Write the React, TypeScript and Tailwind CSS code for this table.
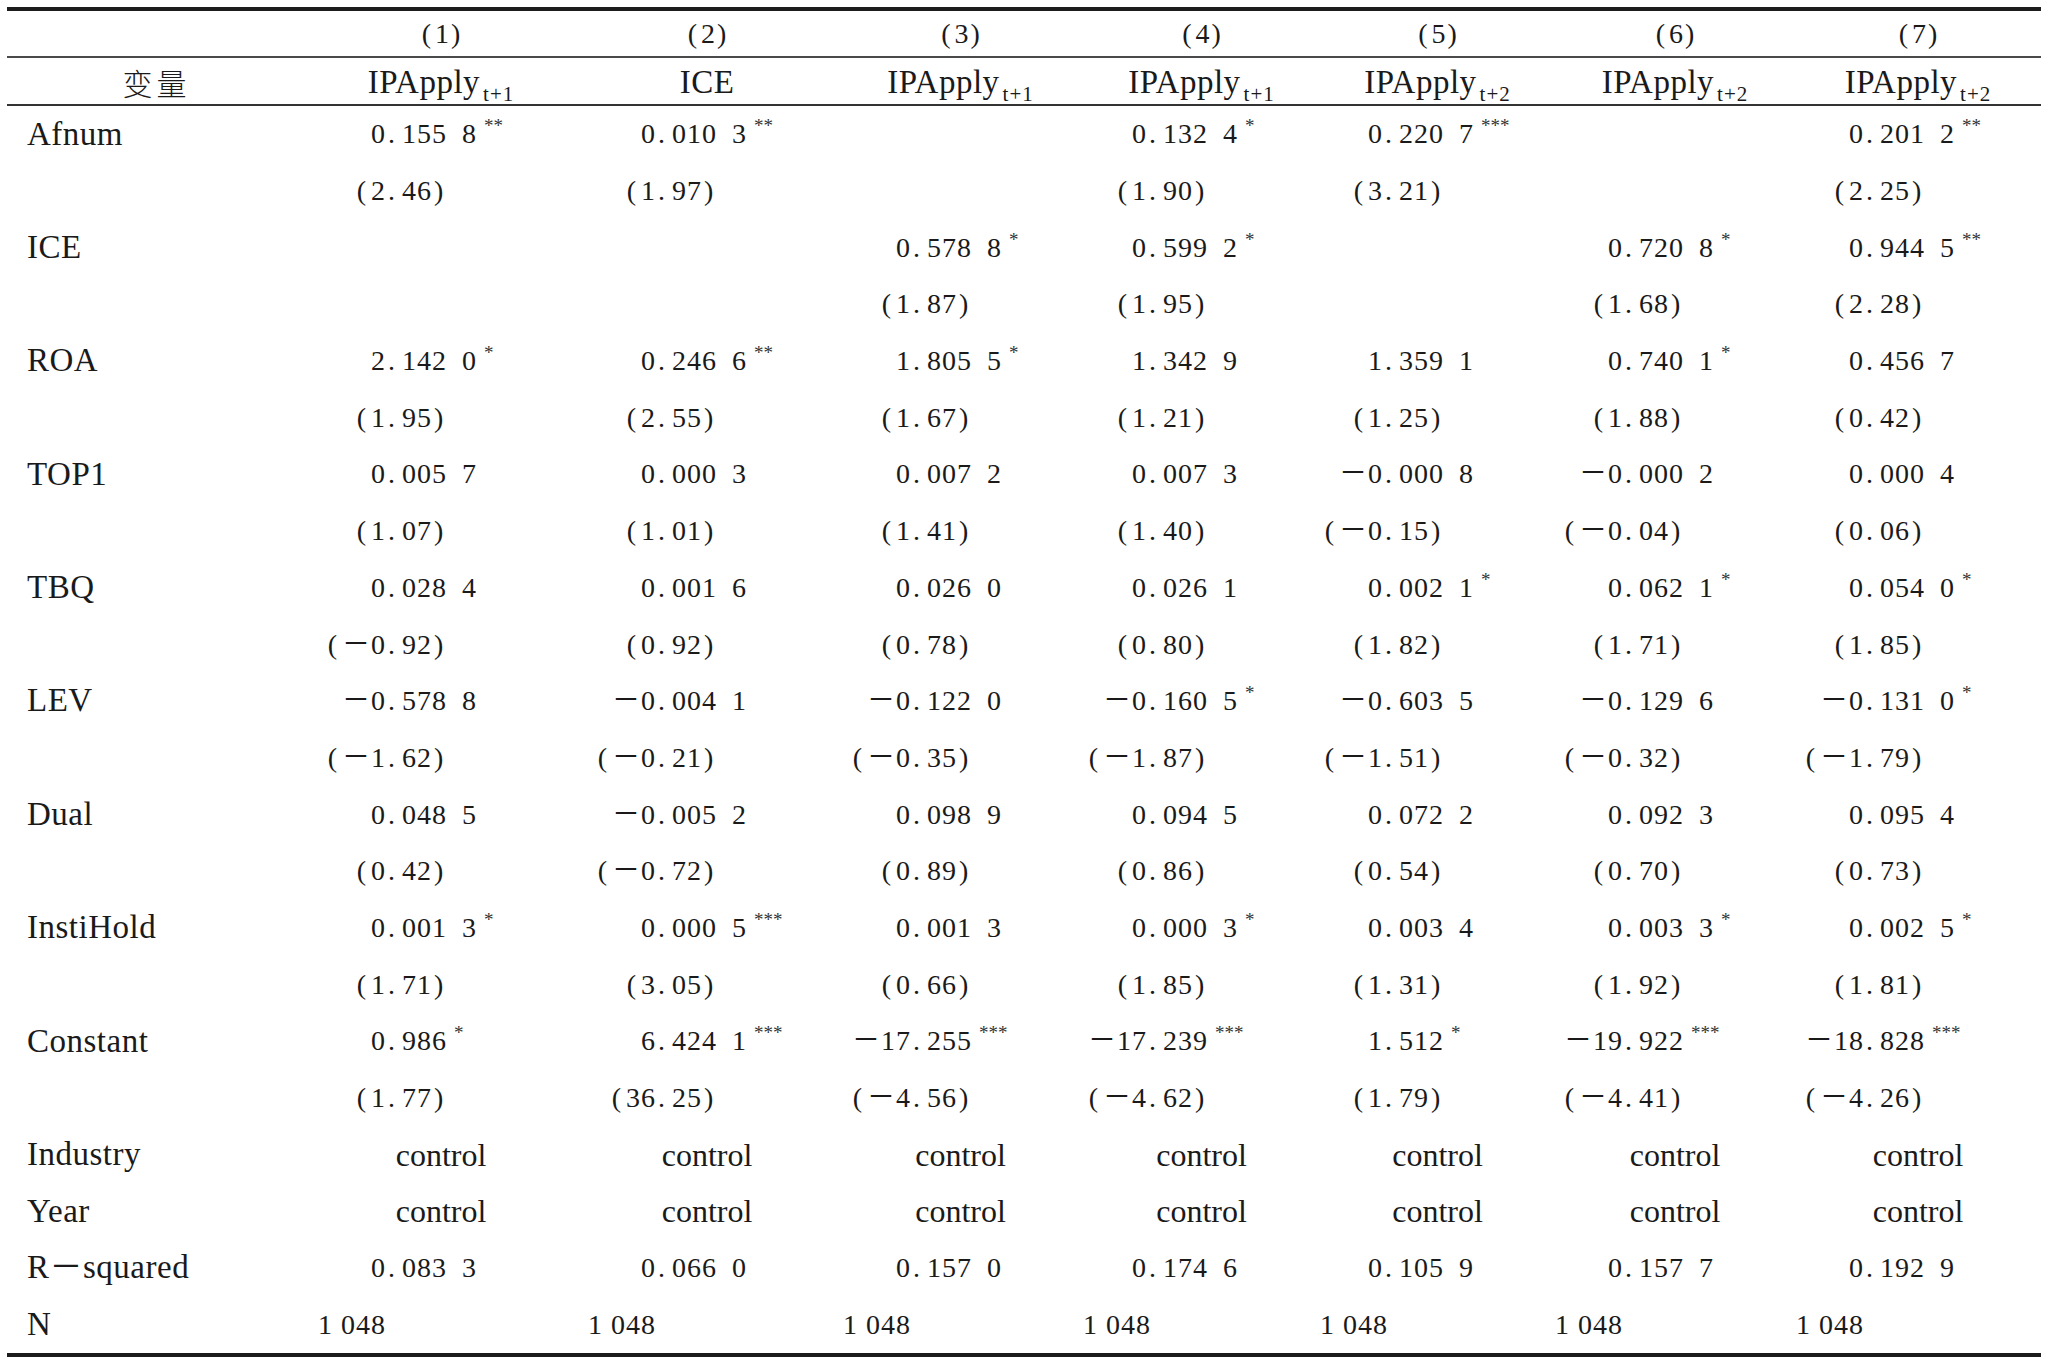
import React from 'react';

type Cell = { v: string; s?: string } | null;

const colWidths = 'grid-cols-[299px_270px_262px_245px_237px_235px_240px_246px]';

// width of the integer part box in each column, so that the decimal points line up
const intBox = ['w-[80px]', 'w-[80px]', 'w-[73px]', 'w-[64px]', 'w-[63px]', 'w-[68px]', 'w-[69px]'];

const heads1 = ['(1)', '(2)', '(3)', '(4)', '(5)', '(6)', '(7)'];
const heads2: [string, string][] = [
  ['IPApply', 't+1'],
  ['ICE', ''],
  ['IPApply', 't+1'],
  ['IPApply', 't+1'],
  ['IPApply', 't+2'],
  ['IPApply', 't+2'],
  ['IPApply', 't+2'],
];

const c = (v: string, s?: string): Cell => ({ v, s });

const rows: { label: string; cells: (Cell | 'control')[] }[] = [
  { label: 'Afnum', cells: [c('0.155 8', '**'), c('0.010 3', '**'), null, c('0.132 4', '*'), c('0.220 7', '***'), null, c('0.201 2', '**')] },
  { label: '', cells: [c('(2.46)'), c('(1.97)'), null, c('(1.90)'), c('(3.21)'), null, c('(2.25)')] },
  { label: 'ICE', cells: [null, null, c('0.578 8', '*'), c('0.599 2', '*'), null, c('0.720 8', '*'), c('0.944 5', '**')] },
  { label: '', cells: [null, null, c('(1.87)'), c('(1.95)'), null, c('(1.68)'), c('(2.28)')] },
  { label: 'ROA', cells: [c('2.142 0', '*'), c('0.246 6', '**'), c('1.805 5', '*'), c('1.342 9'), c('1.359 1'), c('0.740 1', '*'), c('0.456 7')] },
  { label: '', cells: [c('(1.95)'), c('(2.55)'), c('(1.67)'), c('(1.21)'), c('(1.25)'), c('(1.88)'), c('(0.42)')] },
  { label: 'TOP1', cells: [c('0.005 7'), c('0.000 3'), c('0.007 2'), c('0.007 3'), c('-0.000 8'), c('-0.000 2'), c('0.000 4')] },
  { label: '', cells: [c('(1.07)'), c('(1.01)'), c('(1.41)'), c('(1.40)'), c('(-0.15)'), c('(-0.04)'), c('(0.06)')] },
  { label: 'TBQ', cells: [c('0.028 4'), c('0.001 6'), c('0.026 0'), c('0.026 1'), c('0.002 1', '*'), c('0.062 1', '*'), c('0.054 0', '*')] },
  { label: '', cells: [c('(-0.92)'), c('(0.92)'), c('(0.78)'), c('(0.80)'), c('(1.82)'), c('(1.71)'), c('(1.85)')] },
  { label: 'LEV', cells: [c('-0.578 8'), c('-0.004 1'), c('-0.122 0'), c('-0.160 5', '*'), c('-0.603 5'), c('-0.129 6'), c('-0.131 0', '*')] },
  { label: '', cells: [c('(-1.62)'), c('(-0.21)'), c('(-0.35)'), c('(-1.87)'), c('(-1.51)'), c('(-0.32)'), c('(-1.79)')] },
  { label: 'Dual', cells: [c('0.048 5'), c('-0.005 2'), c('0.098 9'), c('0.094 5'), c('0.072 2'), c('0.092 3'), c('0.095 4')] },
  { label: '', cells: [c('(0.42)'), c('(-0.72)'), c('(0.89)'), c('(0.86)'), c('(0.54)'), c('(0.70)'), c('(0.73)')] },
  { label: 'InstiHold', cells: [c('0.001 3', '*'), c('0.000 5', '***'), c('0.001 3'), c('0.000 3', '*'), c('0.003 4'), c('0.003 3', '*'), c('0.002 5', '*')] },
  { label: '', cells: [c('(1.71)'), c('(3.05)'), c('(0.66)'), c('(1.85)'), c('(1.31)'), c('(1.92)'), c('(1.81)')] },
  { label: 'Constant', cells: [c('0.986', '*'), c('6.424 1', '***'), c('-17.255', '***'), c('-17.239', '***'), c('1.512', '*'), c('-19.922', '***'), c('-18.828', '***')] },
  { label: '', cells: [c('(1.77)'), c('(36.25)'), c('(-4.56)'), c('(-4.62)'), c('(1.79)'), c('(-4.41)'), c('(-4.26)')] },
  { label: 'Industry', cells: Array(7).fill('control') },
  { label: 'Year', cells: Array(7).fill('control') },
  { label: 'R-squared', cells: [c('0.083 3'), c('0.066 0'), c('0.157 0'), c('0.174 6'), c('0.105 9'), c('0.157 7'), c('0.192 9')] },
  { label: 'N', cells: Array(7).fill(c('1 048')) },
];

// long dash used for minus signs, as in the printed table
const minus = (t: string) => t.replace(/-/g, '\uFF0D');

// split off the parentheses so they get the loose spacing of the print
const Paren: React.FC<{ t: string }> = ({ t }) => {
  const open = t.startsWith('(');
  const close = t.endsWith(')');
  const mid = t.replace('(', '').replace(')', '');
  return (
    <>
      {open && <span className="mr-[4px]">(</span>}
      {minus(mid)}
      {close && <span className="ml-[2px]">)</span>}
    </>
  );
};

const Num: React.FC<{ cell: Cell; col: number }> = ({ cell, col }) => {
  if (!cell) return null;
  const dot = cell.v.indexOf('.');
  const intPart = dot >= 0 ? cell.v.slice(0, dot) : cell.v;
  const frac = dot >= 0 ? cell.v.slice(dot + 1) : '';
  return (
    <div className="flex items-baseline text-[28px] tracking-[1px]">
      <span className={`${intBox[col]} shrink-0 text-right whitespace-pre`}>
        <Paren t={intPart} />
      </span>
      {dot >= 0 && <span className="inline-block w-[16px] pl-[2px]">.</span>}
      <span className="whitespace-pre">
        <Paren t={frac.replace(/ /g, '\u2002')} />
      </span>
      {cell.s && (
        <span className="ml-[7px] self-start -mt-[1px] text-[19px] tracking-[0px] text-[#333]">{cell.s}</span>
      )}
    </div>
  );
};

export default function App() {
  return (
    <div className="w-[2048px] h-[1360px] bg-white text-[#1a1a1a] font-['Liberation_Serif','Noto_Sans_CJK_SC',serif] overflow-hidden">
      <div className="ml-[7px] mt-[7px] w-[2034px] border-t-[4px] border-[#1c1c1c]">
        {/* column numbers */}
        <div className={`grid ${colWidths} h-[47px] items-center border-b-2 border-[#4a4a4a]`}>
          <div />
          {heads1.map((h) => (
            <div key={h} className="text-center text-[28px]">
              <Paren t={h} />
            </div>
          ))}
        </div>

        {/* dependent variables */}
        <div className={`grid ${colWidths} h-[48px] items-center border-b-2 border-[#333]`}>
          <div className="text-center text-[30px] tracking-[4px] font-['Noto_Sans_CJK_SC',sans-serif] font-light">变量</div>
          {heads2.map(([h, sub], i) => (
            <div key={i} className="text-center text-[33px] tracking-[0.5px]">
              {h}
              {sub && <span className="relative top-[8px] ml-[3px] text-[21px] tracking-[1px]">{sub}</span>}
            </div>
          ))}
        </div>

        {/* body */}
        {rows.map((r, ri) => (
          <div key={ri} className={`grid ${colWidths} h-[56.7px] items-center`}>
            <div className="pl-[20px] text-[33px] tracking-[0.5px] whitespace-pre">{minus(r.label)}</div>
            {r.cells.map((cell, ci) =>
              cell === 'control' ? (
                <div key={ci} className="text-center text-[32px]">
                  control
                </div>
              ) : (
                <div key={ci}>
                  <Num cell={cell} col={ci} />
                </div>
              )
            )}
          </div>
        ))}

        <div className="border-t-[4px] border-[#1c1c1c]" />
      </div>
    </div>
  );
}
